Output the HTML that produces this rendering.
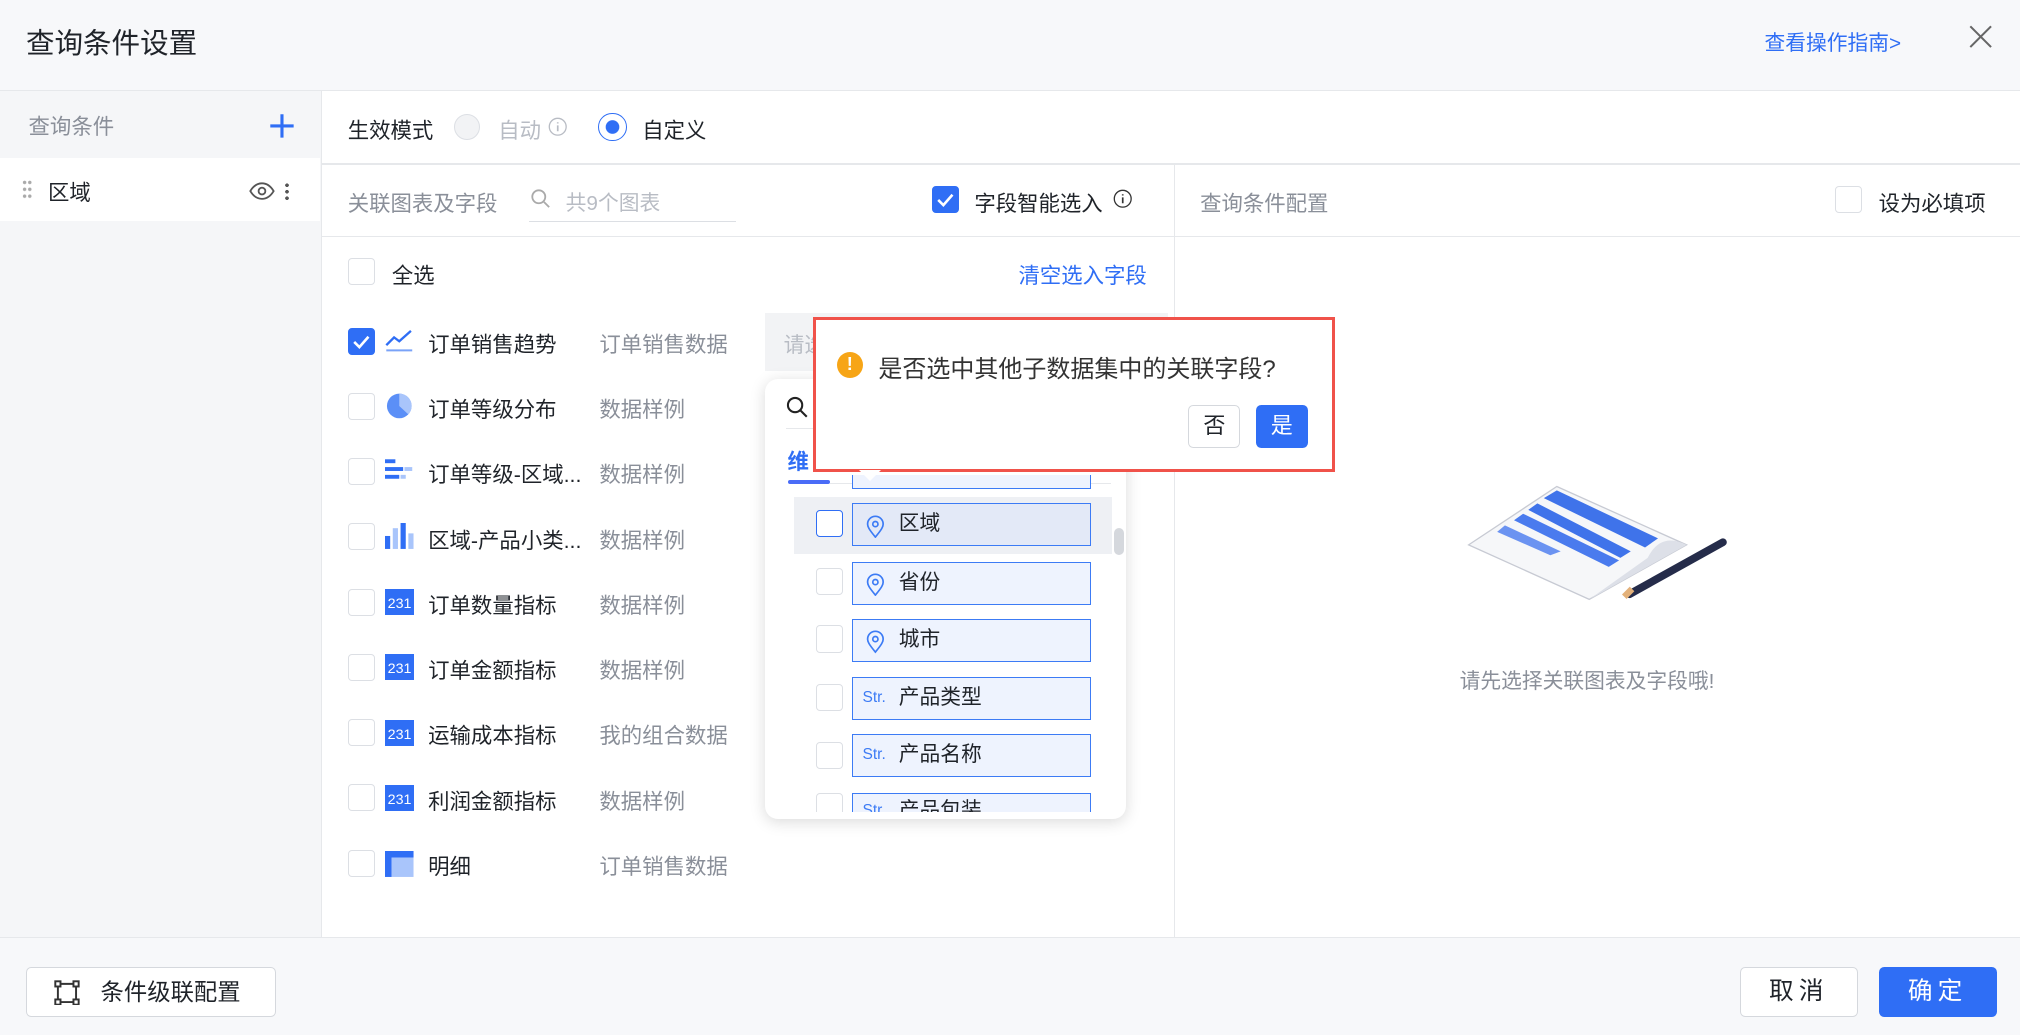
<!DOCTYPE html>
<html><head><meta charset="utf-8"><style>
html{zoom:1.2974}
*{box-sizing:border-box;margin:0;padding:0}
body{width:1557px;height:792px;position:relative;overflow:hidden;font-family:"Liberation Sans","Noto Sans CJK SC",sans-serif;color:#1f2329;background:#fff;font-size:16px}
.a{position:absolute}
.cb{position:absolute;width:21px;height:21px;border:1px solid #dcdfe4;border-radius:3px;background:#fff}
.cbon{background:#2f6ef5;border-color:#2f6ef5}
.g{color:#8a8f99}
.row .t{position:absolute;left:330px;font-size:16.5px}
.row .s{position:absolute;left:462px;color:#8a8f99;font-size:16.5px}
.ic{position:absolute;left:297px;width:22px;height:20px}
.fld{position:absolute;left:657px;width:184px;height:33px;background:#eef3fe;border:1px solid #3c7bf5;font-size:16px;line-height:31px;padding-left:35px}
.fld svg,.fld i{position:absolute;left:9px;top:8px}
.fld i{font-style:normal;color:#3c7bf5;font-size:12px;top:0;left:7px}
.btn{position:absolute;border:1px solid #d5d8dd;border-radius:4px;background:#fff;text-align:center}
</style></head><body>
<!-- header -->
<div class="a" style="left:0;top:0;width:1557px;height:70px;background:#f7f8fa;border-bottom:1px solid #e6e8eb"></div>
<div class="a" style="left:20px;top:16px;font-size:22px">查询条件设置</div>
<div class="a" style="left:1360px;top:20px;font-size:16px;color:#2f6ef5">查看操作指南&gt;</div>
<svg class="a" style="left:1518px;top:19px" width="18" height="18"><path d="M1 1L17 17M17 1L1 17" stroke="#666" stroke-width="1.6"/></svg>
<!-- left panel -->
<div class="a" style="left:0;top:70px;width:248px;height:652px;background:#f5f6f8;border-right:1px solid #e6e8eb"></div>
<div class="a g" style="left:22px;top:85px;font-size:16.5px">查询条件</div>
<svg class="a" style="left:207px;top:87px" width="20" height="20"><path d="M10 1V19M1 10H19" stroke="#2f6ef5" stroke-width="2.4"/></svg>
<div class="a" style="left:0;top:122px;width:247px;height:48px;background:#fff"></div>
<div class="a" style="left:17px;top:138px;width:8px;height:16px;background:radial-gradient(circle,#aaa 1.2px,transparent 1.5px) 0 0/4px 5.3px"></div>
<div class="a" style="left:37px;top:136px;font-size:16.5px">区域</div>
<svg class="a" style="left:192px;top:140px" width="20" height="14"><path d="M1 7C4 2 7 1 10 1S16 2 19 7C16 12 13 13 10 13S4 12 1 7Z" fill="none" stroke="#555" stroke-width="1.4"/><circle cx="10" cy="7" r="2.6" fill="none" stroke="#555" stroke-width="1.4"/></svg>
<div class="a" style="left:220px;top:140px;width:3px;height:14px;background:radial-gradient(circle,#555 1.3px,transparent 1.5px) 0 0/3px 5px"></div>
<!-- mode row -->
<div class="a" style="left:248px;top:126px;width:1309px;height:1px;background:#e6e8eb"></div>
<div class="a" style="left:268px;top:88px;font-size:16.5px">生效模式</div>
<div class="a" style="left:350px;top:88px;width:20px;height:20px;border-radius:50%;border:1px solid #dcdfe4;background:#f2f3f5"></div>
<div class="a" style="left:384px;top:88px;font-size:16.5px;color:#b8bcc4">自动</div>
<svg class="a" style="left:422px;top:90px" width="15" height="15"><circle cx="7.5" cy="7.5" r="6.5" fill="none" stroke="#b8bcc4"/><path d="M7.5 6.5V11M7.5 4V5" stroke="#b8bcc4" stroke-width="1.3"/></svg>
<div class="a" style="left:461px;top:87px;width:22px;height:22px;border-radius:50%;border:1.5px solid #2f6ef5;background:radial-gradient(circle,#2f6ef5 5px,#fff 5.5px)"></div>
<div class="a" style="left:495px;top:88px;font-size:16.5px">自定义</div>
<!-- section header -->
<div class="a" style="left:905px;top:127px;width:1px;height:595px;background:#e6e8eb"></div>
<div class="a" style="left:248px;top:182px;width:1309px;height:1px;background:#e6e8eb"></div>
<div class="a g" style="left:268px;top:144px;font-size:16.5px">关联图表及字段</div>
<svg class="a" style="left:409px;top:146px" width="15" height="15"><circle cx="6" cy="6" r="5" fill="none" stroke="#aaa" stroke-width="1.4"/><path d="M10 10L14 14" stroke="#aaa" stroke-width="1.4"/></svg>
<div class="a" style="left:436px;top:143px;font-size:16px;color:#b8bcc4">共9个图表</div>
<div class="a" style="left:408px;top:170px;width:159px;height:1px;background:#dcdfe4"></div>
<div class="cb cbon" style="left:718px;top:143px"><svg width="19" height="19"><path d="M4 10L8 14L15 6" fill="none" stroke="#fff" stroke-width="2"/></svg></div>
<div class="a" style="left:751px;top:144px;font-size:16.5px">字段智能选入</div>
<svg class="a" style="left:858px;top:146px" width="15" height="15"><circle cx="7.5" cy="7.5" r="6.5" fill="none" stroke="#333"/><path d="M7.5 6.5V11M7.5 4V5" stroke="#333" stroke-width="1.3"/></svg>
<div class="a g" style="left:925px;top:144px;font-size:16.5px">查询条件配置</div>
<div class="cb" style="left:1414px;top:143px"></div>
<div class="a" style="left:1448px;top:144px;font-size:16.5px">设为必填项</div>
<!-- list -->
<div class="cb" style="left:268px;top:199px"></div>
<div class="a" style="left:302px;top:200px;font-size:16.5px">全选</div>
<div class="a" style="left:785px;top:200px;font-size:16.5px;color:#2f6ef5">清空选入字段</div>

<div class="row">
<div class="cb cbon" style="left:268px;top:253px"><svg width="19" height="19"><path d="M4 10L8 14L15 6" fill="none" stroke="#fff" stroke-width="2"/></svg></div>
<svg class="ic" style="top:252px" viewBox="0 0 22 20"><path d="M1 14L7 8L11 11L20 3" fill="none" stroke="#2f6ef5" stroke-width="1.8"/><path d="M1 18H21" stroke="#7aa3f8" stroke-width="1.5"/></svg>
<div class="t" style="top:253px">订单销售趋势</div><div class="s" style="top:253px">订单销售数据</div>
<div class="cb" style="left:268px;top:303px"></div>
<svg class="ic" style="top:303px" viewBox="0 0 22 20"><circle cx="11" cy="10" r="9.5" fill="#5b8ff7"/><path d="M11 10V0.5A9.5 9.5 0 0 1 18 16.5Z" fill="#a9c5fb"/></svg>
<div class="t" style="top:303px">订单等级分布</div><div class="s" style="top:303px">数据样例</div>
<div class="cb" style="left:268px;top:353px"></div>
<svg class="ic" style="top:353px" viewBox="0 0 22 20"><rect x="0" y="1" width="8" height="3" fill="#2f6ef5"/><rect x="0" y="7" width="14" height="3" fill="#2f6ef5"/><rect x="15" y="7" width="6" height="3" fill="#a9c5fb"/><rect x="0" y="13" width="11" height="3" fill="#2f6ef5"/><rect x="12" y="13" width="4" height="3" fill="#a9c5fb"/></svg>
<div class="t" style="top:353px">订单等级-区域...</div><div class="s" style="top:353px">数据样例</div>
<div class="cb" style="left:268px;top:403px"></div>
<svg class="ic" style="top:403px" viewBox="0 0 22 20"><rect x="0" y="10" width="4" height="10" fill="#2f6ef5"/><rect x="6" y="4" width="4" height="16" fill="#a9c5fb"/><rect x="12" y="0" width="4" height="20" fill="#2f6ef5"/><rect x="18" y="8" width="4" height="12" fill="#a9c5fb"/></svg>
<div class="t" style="top:404px">区域-产品小类...</div><div class="s" style="top:404px">数据样例</div>
</div>
<div class="row">
<div class="cb" style="left:268px;top:454px"></div><div class="ic" style="top:454px;background:#2f6ef5;color:#fff;font-size:11px;line-height:24px;text-align:center;height:20px">231</div>
<div class="t" style="top:454px">订单数量指标</div><div class="s" style="top:454px">数据样例</div>
<div class="cb" style="left:268px;top:504px"></div><div class="ic" style="top:504px;background:#2f6ef5;color:#fff;font-size:11px;line-height:24px;text-align:center">231</div>
<div class="t" style="top:504px">订单金额指标</div><div class="s" style="top:504px">数据样例</div>
<div class="cb" style="left:268px;top:554px"></div><div class="ic" style="top:555px;background:#2f6ef5;color:#fff;font-size:11px;line-height:24px;text-align:center">231</div>
<div class="t" style="top:554px">运输成本指标</div><div class="s" style="top:554px">我的组合数据</div>
<div class="cb" style="left:268px;top:604px"></div><div class="ic" style="top:605px;background:#2f6ef5;color:#fff;font-size:11px;line-height:24px;text-align:center">231</div>
<div class="t" style="top:605px">利润金额指标</div><div class="s" style="top:605px">数据样例</div>
<div class="cb" style="left:268px;top:655px"></div>
<svg class="ic" style="top:656px" viewBox="0 0 22 20"><rect width="22" height="20" fill="#a9c5fb"/><rect width="22" height="5" fill="#2f6ef5"/><rect width="5" height="20" fill="#2f6ef5"/></svg>
<div class="t" style="top:655px">明细</div><div class="s" style="top:655px">订单销售数据</div>
</div>
<!-- dropdown input -->
<div class="a" style="left:590px;top:241px;width:310px;height:45px;background:#f2f3f5"></div>
<div class="a" style="left:604px;top:253px;font-size:16px;color:#b8bcc4">请选</div>
<!-- popup -->
<div class="a" style="left:590px;top:292px;width:278px;height:339px;background:#fff;border-radius:10px;box-shadow:0 2px 12px rgba(0,0,0,.15)"></div>
<svg class="a" style="left:606px;top:305px" width="17" height="17"><circle cx="7" cy="7" r="5.5" fill="none" stroke="#222" stroke-width="1.6"/><path d="M11 11L16 16" stroke="#222" stroke-width="1.6"/></svg>
<div class="a" style="left:606px;top:330px;width:250px;height:1px;background:#e6e8eb"></div>
<div class="a" style="left:607px;top:343px;font-size:16.5px;color:#2f6ef5;font-weight:bold">维</div>
<div class="a" style="left:607px;top:370px;width:33px;height:3px;background:#4a6cf7;border-radius:2px"></div>
<div class="a" style="left:640px;top:372px;width:216px;height:1px;background:#e6e8eb"></div>
<div class="a" style="left:657px;top:366px;width:184px;height:11px;background:#eef3fe;border:1px solid #3c7bf5;border-top:none"></div>
<div class="a" style="left:612px;top:383px;width:245px;height:44px;background:#eef0f4"></div>
<div class="a" style="left:859px;top:407px;width:7px;height:21px;background:#d5d8dd;border-radius:4px"></div>
<div class="cb" style="left:629px;top:393px;border-color:#2f6ef5"></div>
<div class="fld" style="top:388px;background:#e3e9f7"><svg width="16" height="18"><path d="M8 17C3 11 2 9 2 7A6 6 0 0 1 14 7C14 9 13 11 8 17Z" fill="none" stroke="#3c7bf5" stroke-width="1.3"/><circle cx="8" cy="7" r="2" fill="none" stroke="#3c7bf5" stroke-width="1.3"/></svg>区域</div>
<div class="cb" style="left:629px;top:438px"></div>
<div class="fld" style="top:433px"><svg width="16" height="18"><path d="M8 17C3 11 2 9 2 7A6 6 0 0 1 14 7C14 9 13 11 8 17Z" fill="none" stroke="#3c7bf5" stroke-width="1.3"/><circle cx="8" cy="7" r="2" fill="none" stroke="#3c7bf5" stroke-width="1.3"/></svg>省份</div>
<div class="cb" style="left:629px;top:482px"></div>
<div class="fld" style="top:477px"><svg width="16" height="18"><path d="M8 17C3 11 2 9 2 7A6 6 0 0 1 14 7C14 9 13 11 8 17Z" fill="none" stroke="#3c7bf5" stroke-width="1.3"/><circle cx="8" cy="7" r="2" fill="none" stroke="#3c7bf5" stroke-width="1.3"/></svg>城市</div>
<div class="cb" style="left:629px;top:527px"></div>
<div class="fld" style="top:522px"><i>Str.</i>产品类型</div>
<div class="cb" style="left:629px;top:572px"></div>
<div class="fld" style="top:566px"><i>Str.</i>产品名称</div>
<div class="a" style="left:612px;top:611px;width:240px;height:15px;overflow:hidden">
<div class="cb" style="left:17px;top:0"></div>
<div class="fld" style="left:45px;top:0;line-height:26px"><i>Str.</i>产品包装</div></div>
<!-- confirm dialog -->
<div class="a" style="left:627px;top:244px;width:402px;height:120px;background:#fff;border:3px solid #f0524a"></div>
<div class="a" style="left:662px;top:362px;width:0;height:0;border-left:9px solid transparent;border-right:9px solid transparent;border-top:9px solid #fff"></div>
<div class="a" style="left:645px;top:271px;width:20px;height:20px;border-radius:50%;background:#f7a516;color:#fff;font-size:14px;font-weight:bold;text-align:center;line-height:20px">!</div>
<div class="a" style="left:677px;top:269px;font-size:18.5px;color:#333">是否选中其他子数据集中的关联字段?</div>
<div class="btn" style="left:916px;top:312px;width:40px;height:33px;font-size:17px;line-height:31px">否</div>
<div class="btn" style="left:968px;top:312px;width:40px;height:33px;font-size:17px;line-height:31px;background:#2f6ef5;border-color:#2f6ef5;color:#fff">是</div>
<!-- empty state -->
<svg class="a" style="left:1130px;top:370px" width="210" height="100" viewBox="0 0 210 100">
<path d="M2 50L70 5L170 50L95 92Z" fill="#f6f7f9" stroke="#c7cad3" stroke-width="1"/>
<path d="M170 50Q150 40 140 60L95 92Z" fill="#dde0e8"/>
<path d="M70 8L148 45L138 52L60 14Z" fill="#3f73ea"/>
<path d="M55 18L127 55L119 60L48 23Z" fill="#3f73ea"/>
<path d="M44 26L118 62L110 67L37 31Z" fill="#4a7bee"/>
<path d="M30 35L73 55L65 58L24 40Z" fill="#6b93f1"/>
<path d="M126 88L198 48" stroke="#252c4a" stroke-width="6" stroke-linecap="round"/>
<path d="M122 90L128 84" stroke="#e3b17a" stroke-width="5"/>
</svg>
<div class="a" style="left:1125px;top:512px;font-size:16px;color:#8a8f99">请先选择关联图表及字段哦!</div>
<!-- footer -->
<div class="a" style="left:0;top:722px;width:1557px;height:76px;background:#f7f8fa;border-top:1px solid #e6e8eb"></div>
<div class="btn" style="left:20px;top:745px;width:193px;height:39px;font-size:18px;line-height:37px;padding-left:30px">条件级联配置</div>
<svg class="a" style="left:42px;top:755px" width="20" height="20"><rect x="1" y="1" width="4" height="4" fill="none" stroke="#333" stroke-width="1.5"/><rect x="15" y="1" width="4" height="4" fill="none" stroke="#333" stroke-width="1.5"/><rect x="1" y="15" width="4" height="4" fill="none" stroke="#333" stroke-width="1.5"/><rect x="15" y="15" width="4" height="4" fill="none" stroke="#333" stroke-width="1.5"/><path d="M5 3H15M3 5V15M5 17H15M17 5V15" stroke="#333" stroke-width="1.5"/></svg>
<div class="btn" style="left:1341px;top:745px;width:91px;height:39px;font-size:19px;line-height:37px;letter-spacing:4px">取消</div>
<div class="btn" style="left:1448px;top:745px;width:91px;height:39px;font-size:19px;line-height:37px;letter-spacing:4px;background:#2f6ef5;border-color:#2f6ef5;color:#fff">确定</div>
</body></html>
